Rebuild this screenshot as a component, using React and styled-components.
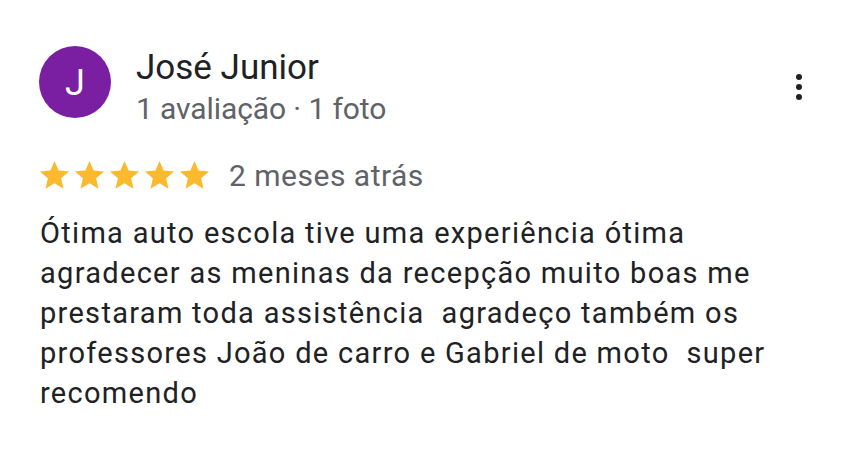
import React from 'react';
import styled, { createGlobalStyle } from 'styled-components';

const GlobalStyle = createGlobalStyle`
  html, body {
    margin: 0;
    padding: 0;
    background: #ffffff;
  }
  body {
    font-family: Roboto, "Liberation Sans", Arial, sans-serif;
    -webkit-font-smoothing: antialiased;
  }
`;

const Card = styled.div`
  width: 866px;
  height: 464px;
  box-sizing: border-box;
  padding: 46px 40px 0 39px;
  background: #fff;
`;

const Header = styled.div`
  display: flex;
  align-items: flex-start;
  gap: 25px;
`;

const Avatar = styled.div`
  width: 72px;
  height: 72px;
  border-radius: 50%;
  background: #7b1fa2;
  color: #fff;
  display: flex;
  align-items: center;
  justify-content: center;
  font-size: 36px;
  padding-top: 2px;
  box-sizing: border-box;
  flex-shrink: 0;
`;

const Info = styled.div`
  flex: 1;
  display: flex;
  flex-direction: column;
  margin-top: 2px;
`;

const Name = styled.div`
  font-size: 35px;
  color: #202124;
  line-height: 40px;
`;

const Meta = styled.div`
  font-size: 30px;
  color: #5f6368;
  line-height: 42px;
  letter-spacing: -0.1px;
`;

const MoreButton = styled.div`
  width: 40px;
  display: flex;
  flex-direction: column;
  align-items: center;
  gap: 4px;
  margin-right: 7px;
  margin-top: 28px;

  span {
    width: 6px;
    height: 6px;
    border-radius: 50%;
    background: #202124;
  }
`;

const RatingRow = styled.div`
  display: flex;
  align-items: center;
  margin-top: 28px;
  height: 35px;
`;

const Stars = styled.div`
  display: flex;
  margin-left: -2px;
  margin-right: 17px;
`;

const Ago = styled.span`
  font-size: 30px;
  color: #5f6368;
  letter-spacing: 0.5px;
`;

const Body = styled.p`
  margin: 20px 0 0 1px;
  font-size: 29px;
  line-height: 40px;
  letter-spacing: 1.3px;
  color: #202124;
  white-space: pre;
`;

const Star = () => (
  <svg width="35" height="35" viewBox="0 0 24 24">
    <path
      fill="#fbb92d"
      d="M12 17.27 18.18 21l-1.64-7.03L22 9.24l-7.19-.61L12 2 9.19 8.63 2 9.24l5.46 4.73L5.82 21z"
    />
  </svg>
);

const lines = [
  'Ótima auto escola tive uma experiência ótima',
  'agradecer as meninas da recepção muito boas me',
  'prestaram toda assistência  agradeço também os',
  'professores João de carro e Gabriel de moto  super',
  'recomendo',
];

export default function App() {
  return (
    <>
      <GlobalStyle />
      <Card>
        <Header>
          <Avatar>J</Avatar>
          <Info>
            <Name>José Junior</Name>
            <Meta>1 avaliação · 1 foto</Meta>
          </Info>
          <MoreButton>
            <span />
            <span />
            <span />
          </MoreButton>
        </Header>
        <RatingRow>
          <Stars>
            {[0, 1, 2, 3, 4].map((i) => (
              <Star key={i} />
            ))}
          </Stars>
          <Ago>2 meses atrás</Ago>
        </RatingRow>
        <Body>{lines.join('\n')}</Body>
      </Card>
    </>
  );
}
